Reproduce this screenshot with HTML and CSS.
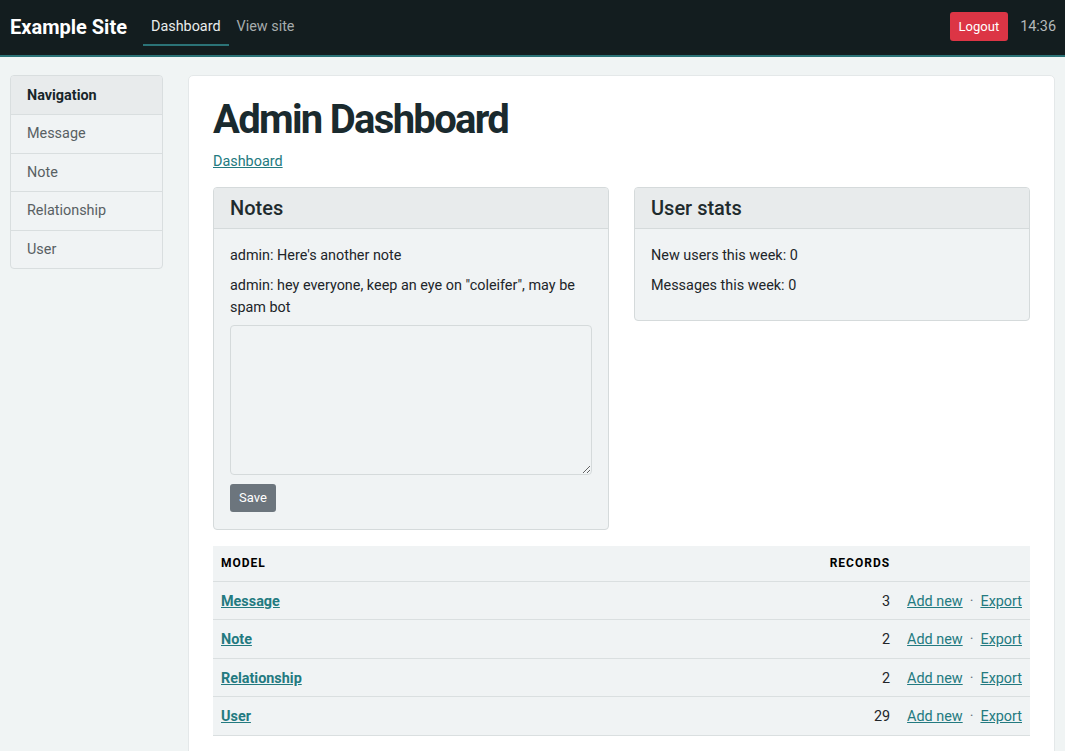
FILE: index.html
```html
<!DOCTYPE html>
<html lang="en">
<head>
  <meta charset="UTF-8">
  <meta name="viewport" content="width=device-width, initial-scale=1.0">
  <title>Admin Dashboard</title>
  <link rel="stylesheet" href="styles.css">
</head>
<body>
  <nav class="topbar">
    <a class="brand" href="#">Example Site</a>
    <ul class="topnav">
      <li><a class="active" href="#">Dashboard</a></li>
      <li><a href="#">View site</a></li>
    </ul>
    <div class="topbar-right">
      <a class="btn btn-logout" href="#">Logout</a>
      <span class="clock">14:36</span>
    </div>
  </nav>

  <div class="layout">
    <aside class="sidebar">
      <div class="list-group">
        <div class="list-head">Navigation</div>
        <a class="list-item" href="#">Message</a>
        <a class="list-item" href="#">Note</a>
        <a class="list-item" href="#">Relationship</a>
        <a class="list-item" href="#">User</a>
      </div>
    </aside>

    <main class="content">
      <h1>Admin Dashboard</h1>
      <div class="crumbs"><a href="#">Dashboard</a></div>

      <div class="panels">
        <section class="panel">
          <div class="panel-head">Notes</div>
          <div class="panel-body">
            <p>admin: Here's another note</p>
            <p>admin: hey everyone, keep an eye on "coleifer", may be spam bot</p>
            <form>
              <textarea class="note-input"></textarea>
              <button type="button" class="btn btn-save">Save</button>
            </form>
          </div>
        </section>

        <section class="panel panel-short">
          <div class="panel-head">User stats</div>
          <div class="panel-body">
            <p>New users this week: 0</p>
            <p>Messages this week: 0</p>
          </div>
        </section>
      </div>

      <table class="models">
        <thead>
          <tr>
            <th>Model</th>
            <th class="num">Records</th>
            <th></th>
          </tr>
        </thead>
        <tbody>
          <tr>
            <td><a class="model-link" href="#">Message</a></td>
            <td class="num">3</td>
            <td class="actions"><a href="#">Add new</a><span class="dot">&middot;</span><a href="#">Export</a></td>
          </tr>
          <tr>
            <td><a class="model-link" href="#">Note</a></td>
            <td class="num">2</td>
            <td class="actions"><a href="#">Add new</a><span class="dot">&middot;</span><a href="#">Export</a></td>
          </tr>
          <tr>
            <td><a class="model-link" href="#">Relationship</a></td>
            <td class="num">2</td>
            <td class="actions"><a href="#">Add new</a><span class="dot">&middot;</span><a href="#">Export</a></td>
          </tr>
          <tr>
            <td><a class="model-link" href="#">User</a></td>
            <td class="num">29</td>
            <td class="actions"><a href="#">Add new</a><span class="dot">&middot;</span><a href="#">Export</a></td>
          </tr>
        </tbody>
      </table>
    </main>
  </div>
</body>
</html>
```

FILE: styles.css
```css
* {
  box-sizing: border-box;
}

body {
  margin: 0;
  background-color: #f0f4f4;
  font-family: Roboto, "Liberation Sans", sans-serif;
  font-size: 14.4px;
  line-height: 22px;
  color: #212529;
}

a {
  color: #237a80;
}

/* top navigation bar */
.topbar {
  display: flex;
  align-items: center;
  height: 57px;
  padding: 0 9px 2px 10px;
  background-color: #131d1f;
  border-bottom: 2px solid #2b7377;
}

.brand {
  color: #fff;
  font-size: 20px;
  font-weight: 700;
  text-decoration: none;
  margin-right: 16px;
}

.topnav {
  display: flex;
  list-style: none;
  margin: 0;
  padding: 0;
  align-self: flex-start;
}

.topnav a {
  display: block;
  height: 46px;
  padding: 16px 8px 6px;
  color: #a6acad;
  text-decoration: none;
  border-bottom: 2px solid transparent;
}

.topnav a.active {
  color: #e9ecec;
  border-bottom-color: #2b7377;
}

.topbar-right {
  margin-left: auto;
  display: flex;
  align-items: center;
  gap: 12px;
}

.btn {
  display: inline-block;
  border: none;
  border-radius: 3px;
  color: #fff;
  font-family: inherit;
  font-size: 13px;
  text-decoration: none;
  cursor: pointer;
}

.btn-logout {
  background-color: #dc3545;
  padding: 4px 9px;
  line-height: 21px;
}

.clock {
  color: #b4b9ba;
}

/* page body */
.layout {
  display: flex;
  align-items: flex-start;
  gap: 25px;
  padding: 18px 10px 0;
}

.sidebar {
  width: 153px;
  flex-shrink: 0;
}

.list-group {
  display: flex;
  flex-direction: column;
  background-color: #f0f3f4;
  border: 1px solid #d9dedf;
  border-radius: 4px;
  overflow: hidden;
}

.list-head,
.list-item {
  padding: 8px 16px;
  height: 38.5px;
  border-top: 1px solid #d9dedf;
}

.list-head {
  border-top: none;
  height: 38px;
  padding-top: 9px;
  padding-bottom: 7px;
  background-color: #e8ebec;
  font-weight: 700;
  color: #17262a;
}

.list-item {
  color: #586063;
  text-decoration: none;
}

.content {
  flex: 1;
  min-height: 700px;
  background-color: #fff;
  border: 1px solid #e4e8e9;
  border-radius: 5px;
  padding: 20px 24px 0;
}

h1 {
  margin: 0;
  font-size: 40px;
  line-height: 48px;
  font-weight: 700;
  letter-spacing: -1.7px;
  color: #1a2a2e;
}

.crumbs {
  margin-top: 7px;
}

.panels {
  display: flex;
  align-items: flex-start;
  gap: 25px;
  margin-top: 14px;
}

.panel {
  flex: 1;
  background-color: #f0f3f4;
  border: 1px solid #d5dadb;
  border-radius: 4px;
  overflow: hidden;
}

.panel-head {
  height: 41px;
  padding: 8px 16px;
  background-color: #e8ebec;
  border-bottom: 1px solid #d5dadb;
  font-size: 20px;
  line-height: 24px;
  font-weight: 500;
  color: #1f2b2e;
}

.panel-body {
  padding: 16px 16px 17px;
}

.panel-body p {
  margin: 0 0 8px;
}

.panel-short .panel-body {
  padding-bottom: 15px;
}

/* pulls the box up into the paragraph gap above it */
.note-input {
  display: block;
  width: 100%;
  height: 150px;
  margin-top: -2px;
  background-color: #f0f3f4;
  border: 1px solid #d5dadb;
  border-radius: 4px;
  resize: vertical;
}

.btn-save {
  margin-top: 9px;
  padding: 3px 9px;
  line-height: 22px;
  background-color: #6c757d;
}

/* model table */
.models {
  width: 100%;
  margin-top: 16px;
  border-collapse: collapse;
  background-color: #f0f3f4;
}

.models th,
.models td {
  padding: 8px;
  text-align: left;
  border-bottom: 1px solid #dadfe0;
}

.models th {
  height: 35px;
  padding: 6px 8px;
  font-size: 12px;
  line-height: 22px;
  font-weight: 700;
  letter-spacing: 1px;
  text-transform: uppercase;
  color: #000;
}

.models td {
  height: 38.5px;
  padding: 9px 8px 7px;
  line-height: 21.5px;
}

.models .num {
  text-align: right;
}

.models .actions {
  width: 1%;
  padding-left: 9px;
  white-space: nowrap;
}

.model-link {
  font-weight: 700;
}

.dot {
  color: #6c757d;
  margin: 0 7px;
}
```
